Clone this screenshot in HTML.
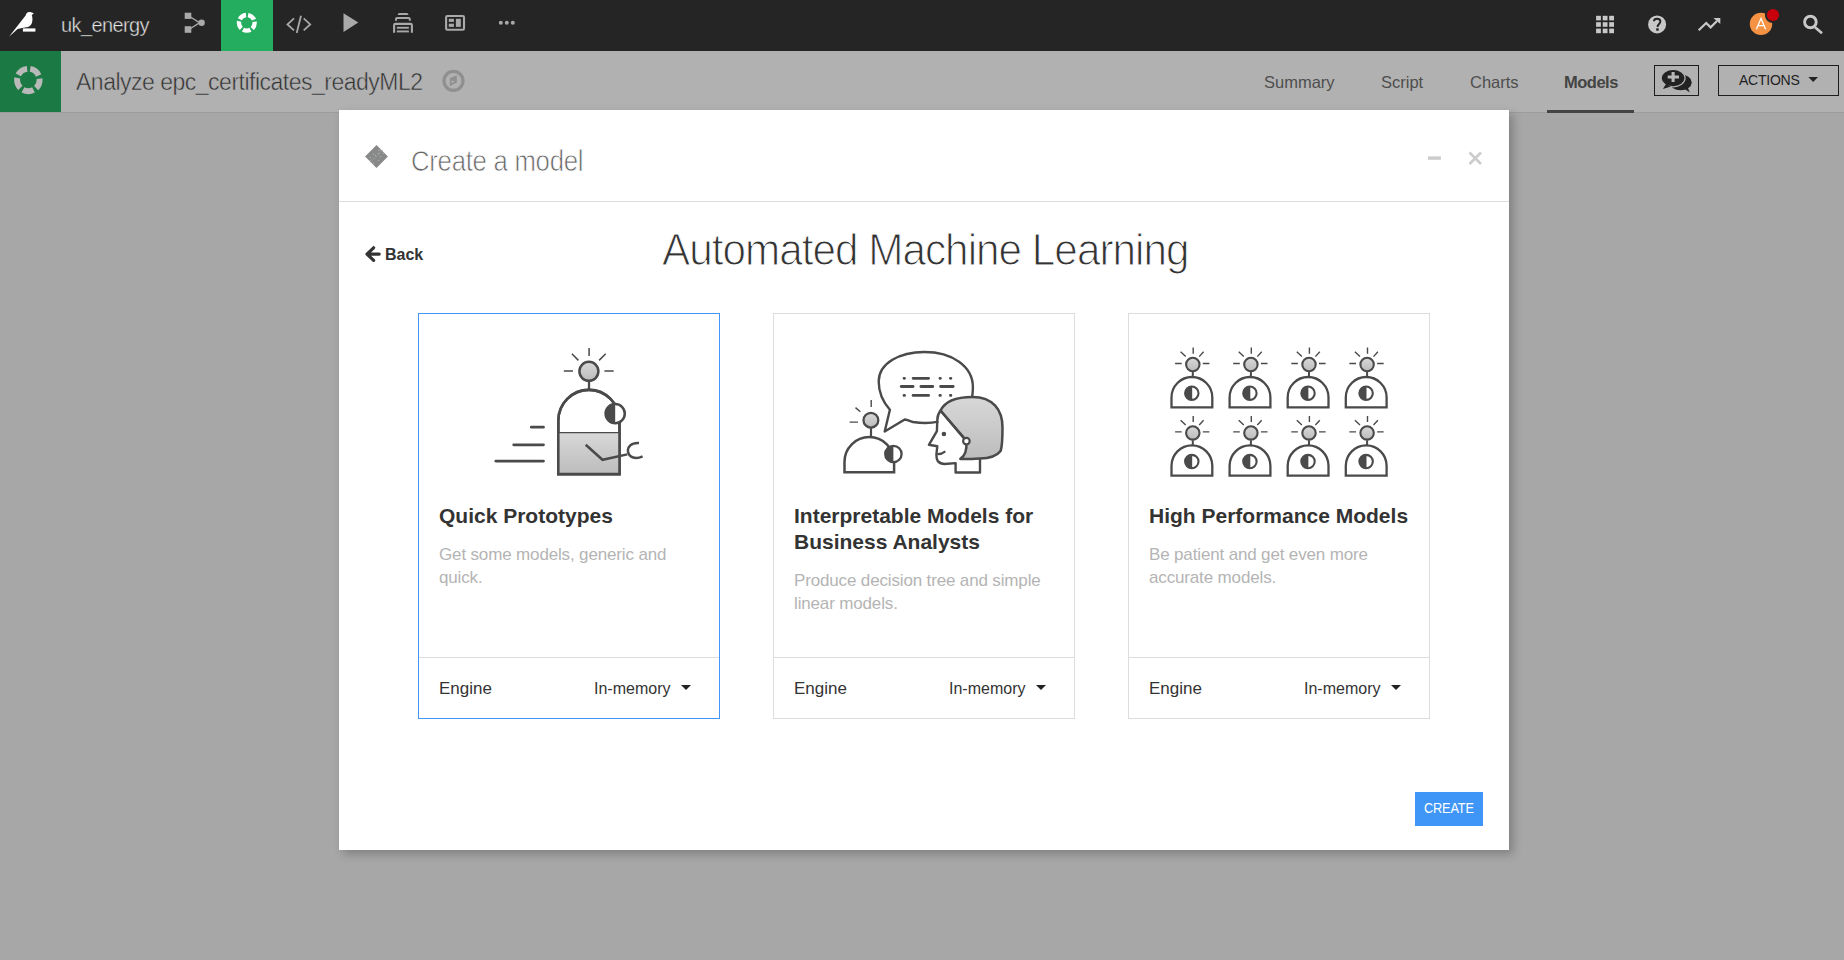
<!DOCTYPE html>
<html><head><meta charset="utf-8">
<style>
*{box-sizing:border-box;margin:0;padding:0}
html,body{width:1844px;height:960px;overflow:hidden;background:#a7a7a7;font-family:"Liberation Sans",sans-serif;position:relative}
.abs{position:absolute}
#top{left:0;top:0;width:1844px;height:51px;background:#252525}
#sub{left:0;top:51px;width:1844px;height:61px;background:#b1b1b1}
#subline{left:0;top:112px;width:1844px;height:1px;background:#9c9c9c}
#greenblk{left:0;top:51px;width:61px;height:61px;background:#1b7a44}
.txt{white-space:nowrap;line-height:1}
#modal{left:339px;top:110px;width:1170px;height:740px;background:#fff;box-shadow:4px 4px 9px rgba(0,0,0,.24)}
.card{position:absolute;top:203px;width:302px;height:406px;border:1px solid #dddddd;background:#fff}
.card.sel{border-color:#4296f7}
.card .div{position:absolute;left:0;right:0;top:343px;height:1px;background:#dddddd}
.ct{position:absolute;left:20px;font-weight:700;font-size:21px;color:#333;white-space:nowrap;line-height:26px}
.cd{position:absolute;left:20px;font-size:17px;color:#b4b4b4;line-height:23px;letter-spacing:-0.15px}
.eng{position:absolute;left:20px;top:365px;font-size:17px;color:#333;white-space:nowrap}
.mem{position:absolute;left:175px;top:366px;font-size:16px;color:#333;white-space:nowrap}
.caret{position:absolute;left:262px;top:371px;width:0;height:0;border-left:5px solid transparent;border-right:5px solid transparent;border-top:5px solid #222}
</style></head><body>
<div id="top" class="abs"></div>
<div id="sub" class="abs"></div>
<div id="subline" class="abs"></div>
<div id="greenblk" class="abs"></div>

<!-- top bar text -->
<div class="abs txt" style="left:61px;top:15px;font-size:20px;color:#e6e6e6;letter-spacing:-0.6px;-webkit-text-stroke:0.4px #252525">uk_energy</div>
<div class="abs" style="left:221px;top:0;width:52px;height:51px;background:#24ad5f"></div>

<!-- sub bar -->
<div class="abs txt" style="left:76px;top:71px;font-size:23px;color:#333;letter-spacing:-0.5px;-webkit-text-stroke:0.5px #b1b1b1">Analyze epc_certificates_readyML2</div>
<div class="abs txt" style="left:1264px;top:74px;font-size:16.5px;color:#4e4e4e">Summary</div>
<div class="abs txt" style="left:1381px;top:74px;font-size:16.5px;color:#4e4e4e">Script</div>
<div class="abs txt" style="left:1470px;top:74px;font-size:16.5px;color:#4e4e4e">Charts</div>
<div class="abs txt" style="left:1564px;top:74px;font-size:16.5px;color:#444;font-weight:700;letter-spacing:-0.5px">Models</div>
<div class="abs" style="left:1547px;top:110px;width:87px;height:3px;background:#444"></div>
<div class="abs" style="left:1654px;top:65px;width:45px;height:31px;border:1px solid #1c1c1c"></div>
<div class="abs" style="left:1718px;top:65px;width:121px;height:31px;border:1px solid #1c1c1c"></div>
<div class="abs txt" style="left:1739px;top:73px;font-size:14px;color:#222;letter-spacing:-0.25px">ACTIONS</div>

<!-- modal -->
<div id="modal" class="abs">
  <div class="abs" style="left:0;top:91px;width:1170px;height:1px;background:#dcdcdc"></div>
  <div class="abs txt" style="left:72px;top:35.5px;font-size:30px;color:#666;letter-spacing:-0.3px;-webkit-text-stroke:0.75px #fff;transform:scaleX(0.857);transform-origin:0 0">Create a model</div>
  <div class="abs txt" style="left:46px;top:137px;font-size:16px;font-weight:700;color:#333">Back</div>
  <div class="abs txt" style="left:323px;top:118px;font-size:44.5px;color:#333;letter-spacing:-1px;-webkit-text-stroke:1.1px #fff;transform:scaleX(0.948);transform-origin:0 0">Automated Machine Learning</div>

  <div class="card sel" style="left:79px">
    <div class="ct" style="top:188.5px">Quick Prototypes</div>
    <div class="cd" style="top:229px">Get some models, generic and<br>quick.</div>
    <div class="div"></div>
    <div class="eng">Engine</div><div class="mem">In-memory</div><div class="caret"></div>
  </div>
  <div class="card" style="left:434px">
    <div class="ct" style="top:188.5px">Interpretable Models for<br>Business Analysts</div>
    <div class="cd" style="top:255px">Produce decision tree and simple<br>linear models.</div>
    <div class="div"></div>
    <div class="eng">Engine</div><div class="mem">In-memory</div><div class="caret"></div>
  </div>
  <div class="card" style="left:789px">
    <div class="ct" style="top:188.5px">High Performance Models</div>
    <div class="cd" style="top:229px">Be patient and get even more<br>accurate models.</div>
    <div class="div"></div>
    <div class="eng">Engine</div><div class="mem">In-memory</div><div class="caret"></div>
  </div>

  <div class="abs" style="left:1076px;top:682px;width:68px;height:34px;background:#4096f6"></div>
  <div class="abs txt" style="left:1085px;top:690px;font-size:15px;color:#fff;letter-spacing:-0.2px;transform:scaleX(0.85);transform-origin:0 0">CREATE</div>
</div>
<svg class="abs" style="left:0;top:0" width="1844" height="960" viewBox="0 0 1844 960"><defs><linearGradient id="g" x1="0" y1="0" x2="0" y2="1"><stop offset="0" stop-color="#d9d8d8"/><stop offset="1" stop-color="#bdbcbc"/></linearGradient></defs>

<path d="M589.1,348 V356 M571.9,353.8 L578.4,360.4 M605.7,353.8 L599.1,360.4 M563.8,371 H573 M604.4,371 H613.7" stroke="#4a4a4a" stroke-width="1.5" fill="none"/>
<path d="M589,381 V390" stroke="#4a4a4a" stroke-width="2.3"/>
<path d="M558.3,474.1 V420.8 A30.6,30.9 0 0 1 619.5,420.8 V474.1 Z" fill="#fff" stroke="#4a4a4a" stroke-width="2.6"/>
<rect x="558.3" y="432.6" width="61.2" height="41.5" fill="url(#g)"/>
<path d="M558.3,432.6 H619.5" stroke="#4a4a4a" stroke-width="1.2"/>
<path d="M558.3,474.1 V420.8 A30.6,30.9 0 0 1 619.5,420.8 V474.1 Z" fill="none" stroke="#4a4a4a" stroke-width="2.6"/>
<circle cx="588.9" cy="371.3" r="9.5" fill="url(#g)" stroke="#4a4a4a" stroke-width="2.5"/>
<circle cx="615.2" cy="413.6" r="9.6" fill="#fff" stroke="#4a4a4a" stroke-width="2.5"/>
<path d="M615.2,404 A9.6,9.6 0 0 0 615.2,423.2 Z" fill="#4a4a4a"/>
<path d="M585.7,444.7 L602.5,459.8 L627.3,454.4" fill="none" stroke="#4a4a4a" stroke-width="2.5"/>
<path d="M639,443 C631,442.5 627.5,447 628,451.5 C629,458 636,459.5 642.6,456.3" fill="none" stroke="#4a4a4a" stroke-width="2.5"/>
<path d="M531.3,427.2 H543.5 M513.7,444.8 H543.5 M495.8,461.1 H543.5" stroke="#4a4a4a" stroke-width="2.8" stroke-linecap="round"/>


<path d="M938.5,421.7 C930,423.5 922,423.5 913,422 C909,421 906.5,419.5 904.7,419.5 L884.7,431.5 L889.9,409.7 C882,401 878.7,391 878.7,381.6 C878.7,363 900,352 924.4,352 C952,352 972.9,366 972.9,387.2 C972.9,391 972.5,394 972.2,397" fill="#fff" stroke="#4a4a4a" stroke-width="2.4" stroke-linejoin="round"/>
<path d="M904,378.3 h0.5 M913.1,378.3 H928.6 M939.9,378.3 h0.5 M950.4,378.3 h0.5 M901.2,386.5 H913.1 M920.9,386.5 H932.8 M940.6,386.5 H953.2 M904,395.4 h0.5 M913.1,395.4 H928.6 M939.9,395.4 h0.5 M950.4,395.4 h0.5" stroke="#4a4a4a" stroke-width="2.8" stroke-linecap="round"/>
<path d="M871.2,399.9 V406.9 M855.5,407.6 L860.4,411.8 M849.6,422.1 H858" stroke="#4a4a4a" stroke-width="1.4"/>
<circle cx="870.9" cy="420.2" r="7.4" fill="url(#g)" stroke="#4a4a4a" stroke-width="2.3"/>
<path d="M871,427.6 V437" stroke="#4a4a4a" stroke-width="2.2"/>
<path d="M844.5,472.3 V461.9 A24.8,24.8 0 0 1 894.1,461.9 V472.3 Z" fill="#fff" stroke="#4a4a4a" stroke-width="2.5"/>
<circle cx="893.4" cy="454" r="8.2" fill="#fff" stroke="#4a4a4a" stroke-width="2.3"/>
<path d="M893.4,445.8 A8.2,8.2 0 0 0 893.4,462.2 Z" fill="#4a4a4a"/>
<path d="M940.6,410.6 C945,401 957,397 972.5,397 C993,397 1002.5,410 1002.5,427.5 C1002.5,440 1002,447 1000.6,451 C996,457 987,458.4 980,458.4 C972,459 965,459.5 960.3,458.9 C965,456 967,450 966.4,441.1 Z" fill="url(#g)" stroke="#4a4a4a" stroke-width="2.5" stroke-linejoin="round"/>
<path d="M940.6,410.6 L964,437.8" stroke="#4a4a4a" stroke-width="2.2"/>
<circle cx="966.4" cy="441.1" r="3.3" fill="#fff" stroke="#4a4a4a" stroke-width="2.2"/>
<path d="M940.6,410.6 C938,414 937.3,417 937.3,420 L936.9,431.2 L928.9,444.8 L937.3,446.2 L936.4,454.7 C936.4,458 937,460 937.8,461.2 C940,463.5 942,464 944.4,464 L955.6,463.1 V472.5 H980 V458.4" fill="none" stroke="#4a4a4a" stroke-width="2.4" stroke-linejoin="round"/>
<circle cx="943.9" cy="434" r="2.3" fill="#4a4a4a"/>
<path d="M937.3,454.2 C940.5,454.3 943,453.3 945.3,451.4" fill="none" stroke="#4a4a4a" stroke-width="2.2"/>

<path d="M1193.2,347.5 V353.7 M1180.6,351.8 L1185.7,356.6 M1203.6,351.8 L1199.2,356.6 M1175.1,363.5 H1181.7 M1202.8,363.5 H1209.4" stroke="#4a4a4a" stroke-width="1.4" fill="none"/><circle cx="1192.8" cy="364.5" r="6.7" fill="url(#g)" stroke="#4a4a4a" stroke-width="2.1"/><path d="M1192.8,371.9 V377.0" stroke="#4a4a4a" stroke-width="2"/><path d="M1171.5,407.3 V397.4 A20.4,20.4 0 0 1 1212.3,397.4 V407.3 Z" fill="#fff" stroke="#4a4a4a" stroke-width="2.3"/><circle cx="1191.8" cy="393.2" r="6.7" fill="#fff" stroke="#4a4a4a" stroke-width="2.1"/><path d="M1192.2,386.5 A6.7,6.7 0 0 0 1192.2,399.9 Z" fill="#4a4a4a"/>
<path d="M1251.3,347.5 V353.7 M1238.7,351.8 L1243.8,356.6 M1261.7,351.8 L1257.3,356.6 M1233.2,363.5 H1239.8 M1260.9,363.5 H1267.5" stroke="#4a4a4a" stroke-width="1.4" fill="none"/><circle cx="1250.9" cy="364.5" r="6.7" fill="url(#g)" stroke="#4a4a4a" stroke-width="2.1"/><path d="M1250.9,371.9 V377.0" stroke="#4a4a4a" stroke-width="2"/><path d="M1229.6,407.3 V397.4 A20.4,20.4 0 0 1 1270.4,397.4 V407.3 Z" fill="#fff" stroke="#4a4a4a" stroke-width="2.3"/><circle cx="1249.9" cy="393.2" r="6.7" fill="#fff" stroke="#4a4a4a" stroke-width="2.1"/><path d="M1250.3,386.5 A6.7,6.7 0 0 0 1250.3,399.9 Z" fill="#4a4a4a"/>
<path d="M1309.4,347.5 V353.7 M1296.8,351.8 L1301.9,356.6 M1319.8,351.8 L1315.4,356.6 M1291.3,363.5 H1297.9 M1319.0,363.5 H1325.6" stroke="#4a4a4a" stroke-width="1.4" fill="none"/><circle cx="1309.0" cy="364.5" r="6.7" fill="url(#g)" stroke="#4a4a4a" stroke-width="2.1"/><path d="M1309.0,371.9 V377.0" stroke="#4a4a4a" stroke-width="2"/><path d="M1287.7,407.3 V397.4 A20.4,20.4 0 0 1 1328.5,397.4 V407.3 Z" fill="#fff" stroke="#4a4a4a" stroke-width="2.3"/><circle cx="1308.0" cy="393.2" r="6.7" fill="#fff" stroke="#4a4a4a" stroke-width="2.1"/><path d="M1308.4,386.5 A6.7,6.7 0 0 0 1308.4,399.9 Z" fill="#4a4a4a"/>
<path d="M1367.5,347.5 V353.7 M1354.9,351.8 L1360.0,356.6 M1377.9,351.8 L1373.5,356.6 M1349.4,363.5 H1356.0 M1377.1,363.5 H1383.7" stroke="#4a4a4a" stroke-width="1.4" fill="none"/><circle cx="1367.1" cy="364.5" r="6.7" fill="url(#g)" stroke="#4a4a4a" stroke-width="2.1"/><path d="M1367.1,371.9 V377.0" stroke="#4a4a4a" stroke-width="2"/><path d="M1345.8,407.3 V397.4 A20.4,20.4 0 0 1 1386.6,397.4 V407.3 Z" fill="#fff" stroke="#4a4a4a" stroke-width="2.3"/><circle cx="1366.1" cy="393.2" r="6.7" fill="#fff" stroke="#4a4a4a" stroke-width="2.1"/><path d="M1366.5,386.5 A6.7,6.7 0 0 0 1366.5,399.9 Z" fill="#4a4a4a"/>
<path d="M1193.2,415.9 V422.09999999999997 M1180.6,420.2 L1185.7,425.0 M1203.6,420.2 L1199.2,425.0 M1175.1,431.9 H1181.7 M1202.8,431.9 H1209.4" stroke="#4a4a4a" stroke-width="1.4" fill="none"/><circle cx="1192.8" cy="432.9" r="6.7" fill="url(#g)" stroke="#4a4a4a" stroke-width="2.1"/><path d="M1192.8,440.29999999999995 V445.4" stroke="#4a4a4a" stroke-width="2"/><path d="M1171.5,475.7 V465.79999999999995 A20.4,20.4 0 0 1 1212.3,465.79999999999995 V475.7 Z" fill="#fff" stroke="#4a4a4a" stroke-width="2.3"/><circle cx="1191.8" cy="461.6" r="6.7" fill="#fff" stroke="#4a4a4a" stroke-width="2.1"/><path d="M1192.2,454.9 A6.7,6.7 0 0 0 1192.2,468.3 Z" fill="#4a4a4a"/>
<path d="M1251.3,415.9 V422.09999999999997 M1238.7,420.2 L1243.8,425.0 M1261.7,420.2 L1257.3,425.0 M1233.2,431.9 H1239.8 M1260.9,431.9 H1267.5" stroke="#4a4a4a" stroke-width="1.4" fill="none"/><circle cx="1250.9" cy="432.9" r="6.7" fill="url(#g)" stroke="#4a4a4a" stroke-width="2.1"/><path d="M1250.9,440.29999999999995 V445.4" stroke="#4a4a4a" stroke-width="2"/><path d="M1229.6,475.7 V465.79999999999995 A20.4,20.4 0 0 1 1270.4,465.79999999999995 V475.7 Z" fill="#fff" stroke="#4a4a4a" stroke-width="2.3"/><circle cx="1249.9" cy="461.6" r="6.7" fill="#fff" stroke="#4a4a4a" stroke-width="2.1"/><path d="M1250.3,454.9 A6.7,6.7 0 0 0 1250.3,468.3 Z" fill="#4a4a4a"/>
<path d="M1309.4,415.9 V422.09999999999997 M1296.8,420.2 L1301.9,425.0 M1319.8,420.2 L1315.4,425.0 M1291.3,431.9 H1297.9 M1319.0,431.9 H1325.6" stroke="#4a4a4a" stroke-width="1.4" fill="none"/><circle cx="1309.0" cy="432.9" r="6.7" fill="url(#g)" stroke="#4a4a4a" stroke-width="2.1"/><path d="M1309.0,440.29999999999995 V445.4" stroke="#4a4a4a" stroke-width="2"/><path d="M1287.7,475.7 V465.79999999999995 A20.4,20.4 0 0 1 1328.5,465.79999999999995 V475.7 Z" fill="#fff" stroke="#4a4a4a" stroke-width="2.3"/><circle cx="1308.0" cy="461.6" r="6.7" fill="#fff" stroke="#4a4a4a" stroke-width="2.1"/><path d="M1308.4,454.9 A6.7,6.7 0 0 0 1308.4,468.3 Z" fill="#4a4a4a"/>
<path d="M1367.5,415.9 V422.09999999999997 M1354.9,420.2 L1360.0,425.0 M1377.9,420.2 L1373.5,425.0 M1349.4,431.9 H1356.0 M1377.1,431.9 H1383.7" stroke="#4a4a4a" stroke-width="1.4" fill="none"/><circle cx="1367.1" cy="432.9" r="6.7" fill="url(#g)" stroke="#4a4a4a" stroke-width="2.1"/><path d="M1367.1,440.29999999999995 V445.4" stroke="#4a4a4a" stroke-width="2"/><path d="M1345.8,475.7 V465.79999999999995 A20.4,20.4 0 0 1 1386.6,465.79999999999995 V475.7 Z" fill="#fff" stroke="#4a4a4a" stroke-width="2.3"/><circle cx="1366.1" cy="461.6" r="6.7" fill="#fff" stroke="#4a4a4a" stroke-width="2.1"/><path d="M1366.5,454.9 A6.7,6.7 0 0 0 1366.5,468.3 Z" fill="#4a4a4a"/></svg>
<svg class="abs" style="left:0;top:0" width="1844" height="960" viewBox="0 0 1844 960"><path d="M9,36.8 L25.6,15.4 C26.2,13 27.6,11.9 29.2,11.9 C31,11.9 32.4,12.4 33.8,13.4 L31.8,15.1 C32.6,17.6 32.6,20.2 32.1,22.2 C31.5,24.6 30,26.1 28,26.9 L22.2,27.9 L17.6,29.1 Z" fill="#ffffff"/>
<rect x="22.9" y="28.4" width="12.5" height="3.2" fill="#ffffff"/>
<rect x="184.7" y="12.7" width="6.6" height="6.2" fill="#a9a9a9"/><rect x="184.7" y="26.2" width="6.6" height="6.6" fill="#a9a9a9"/><circle cx="201.6" cy="22.8" r="3.2" fill="#a9a9a9"/><path d="M190.5,17 L199,22.4 M190.5,28.5 L199,23.2" stroke="#a9a9a9" stroke-width="1.4"/>
<circle cx="246.8" cy="22.8" r="7.85" fill="none" stroke="#ffffff" stroke-width="4.4" stroke-dasharray="7.765 2.100" stroke-dashoffset="1.416"/>
<path d="M294,18.4 L287.5,24.4 L294,30.3 M303.7,18.4 L310.2,24.4 L303.7,30.3 M301,15.8 L296.7,33" fill="none" stroke="#a9a9a9" stroke-width="1.8"/>
<path d="M343.5,13.3 L358.3,22.6 L343.5,32.1 Z" fill="#a9a9a9"/>
<path d="M397.8,15 V14.6 Q397.8,13 399.4,13 H406.8 Q408.4,13 408.4,14.6 V15 Z" fill="#a9a9a9"/>
<path d="M396,20.8 V19.2 Q396,18.1 397.1,18.1 H408.7 Q409.8,18.1 409.8,19.2 V20.8" fill="none" stroke="#a9a9a9" stroke-width="2"/>
<path d="M394.1,32.7 V25.2 Q394.1,23.9 395.4,23.9 H410.6 Q411.9,23.9 411.9,25.2 V32.7" fill="none" stroke="#a9a9a9" stroke-width="2.1"/>
<rect x="396.8" y="26.8" width="12.1" height="1.9" fill="#a9a9a9"/><rect x="396.8" y="30.5" width="12.1" height="1.9" fill="#a9a9a9"/>
<rect x="446.1" y="16" width="17.9" height="13.8" rx="1.2" fill="none" stroke="#a9a9a9" stroke-width="2.1"/>
<rect x="448.8" y="18.8" width="5.1" height="3.1" fill="#a9a9a9"/><rect x="448.8" y="23.7" width="5.1" height="3.2" fill="#a9a9a9"/><rect x="455.9" y="18.8" width="4.9" height="8.1" fill="#a9a9a9"/>
<circle cx="500.8" cy="22.8" r="2" fill="#a9a9a9"/><circle cx="506.8" cy="22.8" r="2" fill="#a9a9a9"/><circle cx="512.8" cy="22.8" r="2" fill="#a9a9a9"/>
<rect x="1596.1" y="15.8" width="4.8" height="4.6" fill="#c8c8c8"/>
<rect x="1596.1" y="22.2" width="4.8" height="4.6" fill="#c8c8c8"/>
<rect x="1596.1" y="28.6" width="4.8" height="4.6" fill="#c8c8c8"/>
<rect x="1602.7" y="15.8" width="4.8" height="4.6" fill="#c8c8c8"/>
<rect x="1602.7" y="22.2" width="4.8" height="4.6" fill="#c8c8c8"/>
<rect x="1602.7" y="28.6" width="4.8" height="4.6" fill="#c8c8c8"/>
<rect x="1609.2" y="15.8" width="4.8" height="4.6" fill="#c8c8c8"/>
<rect x="1609.2" y="22.2" width="4.8" height="4.6" fill="#c8c8c8"/>
<rect x="1609.2" y="28.6" width="4.8" height="4.6" fill="#c8c8c8"/>
<circle cx="1657.1" cy="24.4" r="9" fill="#c8c8c8"/>
<path d="M1653.9,21.3 C1654,19.5 1655.3,18.8 1657,18.8 C1659,18.8 1660.4,19.9 1660.4,21.6 C1660.4,23.9 1657.5,24.2 1657.5,26.9" fill="none" stroke="#222" stroke-width="1.9"/><rect x="1656.2" y="28.3" width="2.5" height="2.4" fill="#222"/>
<path d="M1698.7,30.2 L1706.2,23 L1710.6,27.4 L1717,21" fill="none" stroke="#c8c8c8" stroke-width="2.2"/><path d="M1713.4,18 H1720.3 V24 Z" fill="#c8c8c8"/>
<circle cx="1761" cy="23.9" r="11.2" fill="#f59243"/>
<path d="M1756.4,29.3 L1761,18.4 L1765.6,29.3 M1758,25.6 H1764" fill="none" stroke="#ffffff" stroke-width="1.3"/>
<circle cx="1773" cy="15" r="8.1" fill="#252525"/><circle cx="1773" cy="15" r="6.1" fill="#c8000b"/>
<circle cx="1810.4" cy="22" r="5.8" fill="none" stroke="#c8c8c8" stroke-width="2.9"/><path d="M1815,27.3 L1822,33.2" stroke="#c8c8c8" stroke-width="2.6"/>
<circle cx="28.35" cy="80.0" r="11.25" fill="none" stroke="#b9b9b9" stroke-width="5.9" stroke-dasharray="10.937 3.200" stroke-dashoffset="1.934"/>
<circle cx="453.5" cy="80.8" r="9.5" fill="none" stroke="#8f8f8f" stroke-width="3.2"/>
<path d="M449.9,78.3 L456.8,75.2 V82.6 L449.9,86 Z" fill="#8f8f8f"/><path d="M451.6,80.4 L454.8,81.6 L451.6,83.2 Z" fill="#b1b1b1"/>
<ellipse cx="1680.6" cy="82.4" rx="11.1" ry="7.9" fill="#222"/><path d="M1684,88.5 L1689.8,92.6 L1687.6,87 Z" fill="#222"/>
<path d="M1666,84.5 L1663.2,88.8 L1670.5,86.2 Z" fill="#222" stroke="#b1b1b1" stroke-width="0"/>
<ellipse cx="1673.1" cy="78.1" rx="12" ry="8.7" fill="#222" stroke="#b1b1b1" stroke-width="1.2"/>
<path d="M1666.2,83.8 L1663.2,88.8 L1670.8,86.4 Z" fill="#222"/>
<path d="M1673.1,71.9 V82.1 M1667.7,77 H1679" stroke="#b8b8b8" stroke-width="3.1"/>
<path d="M1808.4,77 H1818 L1813.2,82 Z" fill="#222"/>
<path d="M376.5,145.1 L387.9,156.5 L376.5,168 L365.1,156.5 Z" fill="#888888"/><path d="M370.5,162 L383.5,149.5" stroke="#aab2b5" stroke-width="0.8" stroke-dasharray="1.2 0.8"/><circle cx="373.4" cy="154" r="0.65" fill="#aab2b5"/><circle cx="375.4" cy="155.4" r="0.65" fill="#aab2b5"/><circle cx="370.4" cy="157.5" r="0.65" fill="#aab2b5"/><circle cx="370" cy="160.4" r="0.65" fill="#aab2b5"/><circle cx="378.4" cy="160.4" r="0.65" fill="#aab2b5"/><circle cx="380.4" cy="156.5" r="0.65" fill="#aab2b5"/><circle cx="378.4" cy="150.3" r="0.65" fill="#aab2b5"/><circle cx="378.4" cy="153.4" r="0.65" fill="#aab2b5"/><circle cx="373.4" cy="163.25" r="0.65" fill="#aab2b5"/><circle cx="380" cy="150.4" r="0.65" fill="#aab2b5"/><circle cx="383.5" cy="153.4" r="0.65" fill="#aab2b5"/>
<rect x="1427.9" y="156.4" width="13" height="3.4" fill="#cccccc"/>
<path d="M1469.5,152.5 L1481,164 M1481,152.5 L1469.5,164" stroke="#cccccc" stroke-width="2.6"/>
<path d="M373.6,247.8 L367,254.1 L373.6,260.4 M367.8,254.1 H379.2" fill="none" stroke="#333" stroke-width="3.2" stroke-linecap="round" stroke-linejoin="round"/></svg>
</body></html>
